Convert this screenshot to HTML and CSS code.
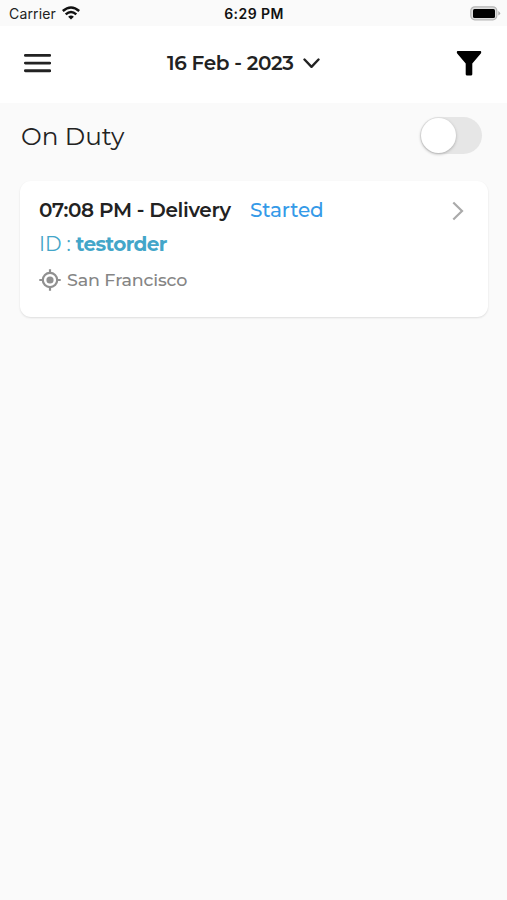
FILE: index.html
```html
<!DOCTYPE html>
<html lang="en">
<head>
<meta charset="utf-8">
<title>Orders</title>
<link rel="stylesheet" href="styles.css">
</head>
<body>
<div class="status">
  <div class="carrier"><span class="carrier-name">Carrier</span>
    <svg width="18" height="14" viewBox="0 0 18 14" fill="none" stroke="#111" stroke-width="2.5"><path d="M.8 5Q9-2 17.2 5"/><path d="M3.7 8.4Q9 3.7 14.3 8.4"/><path d="M6.1 10.7Q9 8.3 11.9 10.7L9 13.6Z" fill="#111" stroke="none"/></svg>
  </div>
  <time class="clock">6:29 PM</time>
  <svg class="battery" width="31" height="15" viewBox="0 0 31 15"><rect x=".8" y=".8" width="26" height="13" rx="4" fill="#dedede" stroke="#b5b5b5" stroke-width="1.2"/><rect x="3" y="3" width="22" height="9" rx="1.5"/><path d="M28.3 5Q32 7.3 28.3 9.6Z" fill="#aaa"/></svg>
</div>
<header class="header">
  <svg width="28" height="20" viewBox="0 0 28 20" stroke="#222" stroke-width="2.9" stroke-linecap="round"><path d="M2.4 2.4h24.4M2.4 10.1h24.4M2.4 17.8h24.4"/></svg>
  <div class="date"><span class="date-text">16 Feb - 2023</span>
    <svg class="caret" width="17" height="11" viewBox="0 0 17 11" fill="none" stroke="#222" stroke-width="2.4" stroke-linecap="round" stroke-linejoin="round"><path d="M1.5 1.5l7 7.3 7-7.3"/></svg>
  </div>
  <svg width="26" height="26" viewBox="0 0 26 26"><path d="M1.8 1H24.2Q25.4 1 25.2 2.4Q25.2 3 24.6 3.7L16.3 13.5V24.2Q16.3 25.6 14.9 25.6H11.1Q9.7 25.6 9.7 24.2V13.5L1.4 3.7Q.8 3 .8 2.2Q.8 1 1.8 1Z"/></svg>
</header>
<main class="main">
  <div class="duty"><span class="duty-text">On Duty</span><span class="toggle"><span class="knob"></span></span></div>
  <article class="card">
    <div class="top">
      <span class="title">07:08 PM - Delivery</span><span class="state">Started</span>
      <svg class="next" width="12" height="20" viewBox="0 0 12 20" fill="none" stroke="#aaa" stroke-width="2.2"><path d="M1.3 1.5L10 10l-8.7 8.5"/></svg>
    </div>
    <div class="order"><span class="label">ID :</span><span class="id">testorder</span></div>
    <div class="place">
      <svg width="22" height="22" viewBox="0 0 22 22" fill="none" stroke="#909090" stroke-width="2.2"><circle cx="11" cy="11" r="7.2"/><circle cx="11" cy="11" r="3.6" fill="#909090" stroke="none"/><path d="M11 .3V4M11 18v3.7M.3 11H4M18 11h3.7"/></svg>
      <span class="city">San Francisco</span>
    </div>
  </article>
</main>
</body>
</html>
```
FILE: styles.css
```css
* { box-sizing: border-box; }
body { margin: 0; min-height: 900px; background: #fafafa; color: #222; font-family: Montserrat, Inter, sans-serif; }
svg { display: block; flex: none; }
span, time { white-space: nowrap; }
.status { display: grid; grid-template-columns: 1fr auto 1fr; align-items: center; height: 26px; padding: 0 6px 0 9px; font-family: Inter, sans-serif; }
.carrier { display: flex; align-items: center; gap: 6px; font-size: 14px; letter-spacing: .15px; }
.clock { margin-right: 2px; font-size: 14px; font-weight: 600; letter-spacing: .45px; color: #111; }
.battery { justify-self: end; }
.header { display: flex; align-items: center; height: 77px; padding: 0 25px 3px 23px; background: #fff; }
.date { display: flex; align-items: center; gap: 9px; margin: 0 auto 0 116px; padding-bottom: 1px; font-size: 20px; font-weight: 600; letter-spacing: -.37px; }
.caret { margin-top: 2px; }
.main { padding: 0 19px 0 20px; }
.duty { display: flex; align-items: center; justify-content: space-between; height: 78px; padding: 0 6px 13px 1px; font-size: 24.7px; }
.toggle { display: flex; align-items: center; width: 62px; height: 37px; padding: 1px; border-radius: 19px; background: #e6e6e6; }
.knob { width: 35px; height: 35px; border-radius: 50%; background: #fff; box-shadow: 0 1px 3px #aaa; }
.card { height: 136px; padding: 14px 24px 0 19px; border-radius: 11px; background: #fff; box-shadow: 0 1px 2px #ddd; }
.top { display: flex; align-items: center; height: 31px; font-size: 20px; }
.title { width: 192px; padding-bottom: 1px; font-weight: 600; letter-spacing: -.35px; }
.state { margin-left: 19px; padding-bottom: 1px; font-weight: 500; letter-spacing: -.15px; color: #359ae8; }
.next { margin-left: auto; }
.order { display: flex; align-items: center; gap: 5px; height: 35px; font-size: 20px; letter-spacing: -.1px; color: #43a6c9; }
.id { font-weight: 700; letter-spacing: -.6px; }
.place { display: flex; align-items: center; gap: 6px; height: 38px; font-size: 17.5px; font-weight: 500; letter-spacing: -.15px; color: #858585; }
.city { padding-bottom: 1px; }
```
